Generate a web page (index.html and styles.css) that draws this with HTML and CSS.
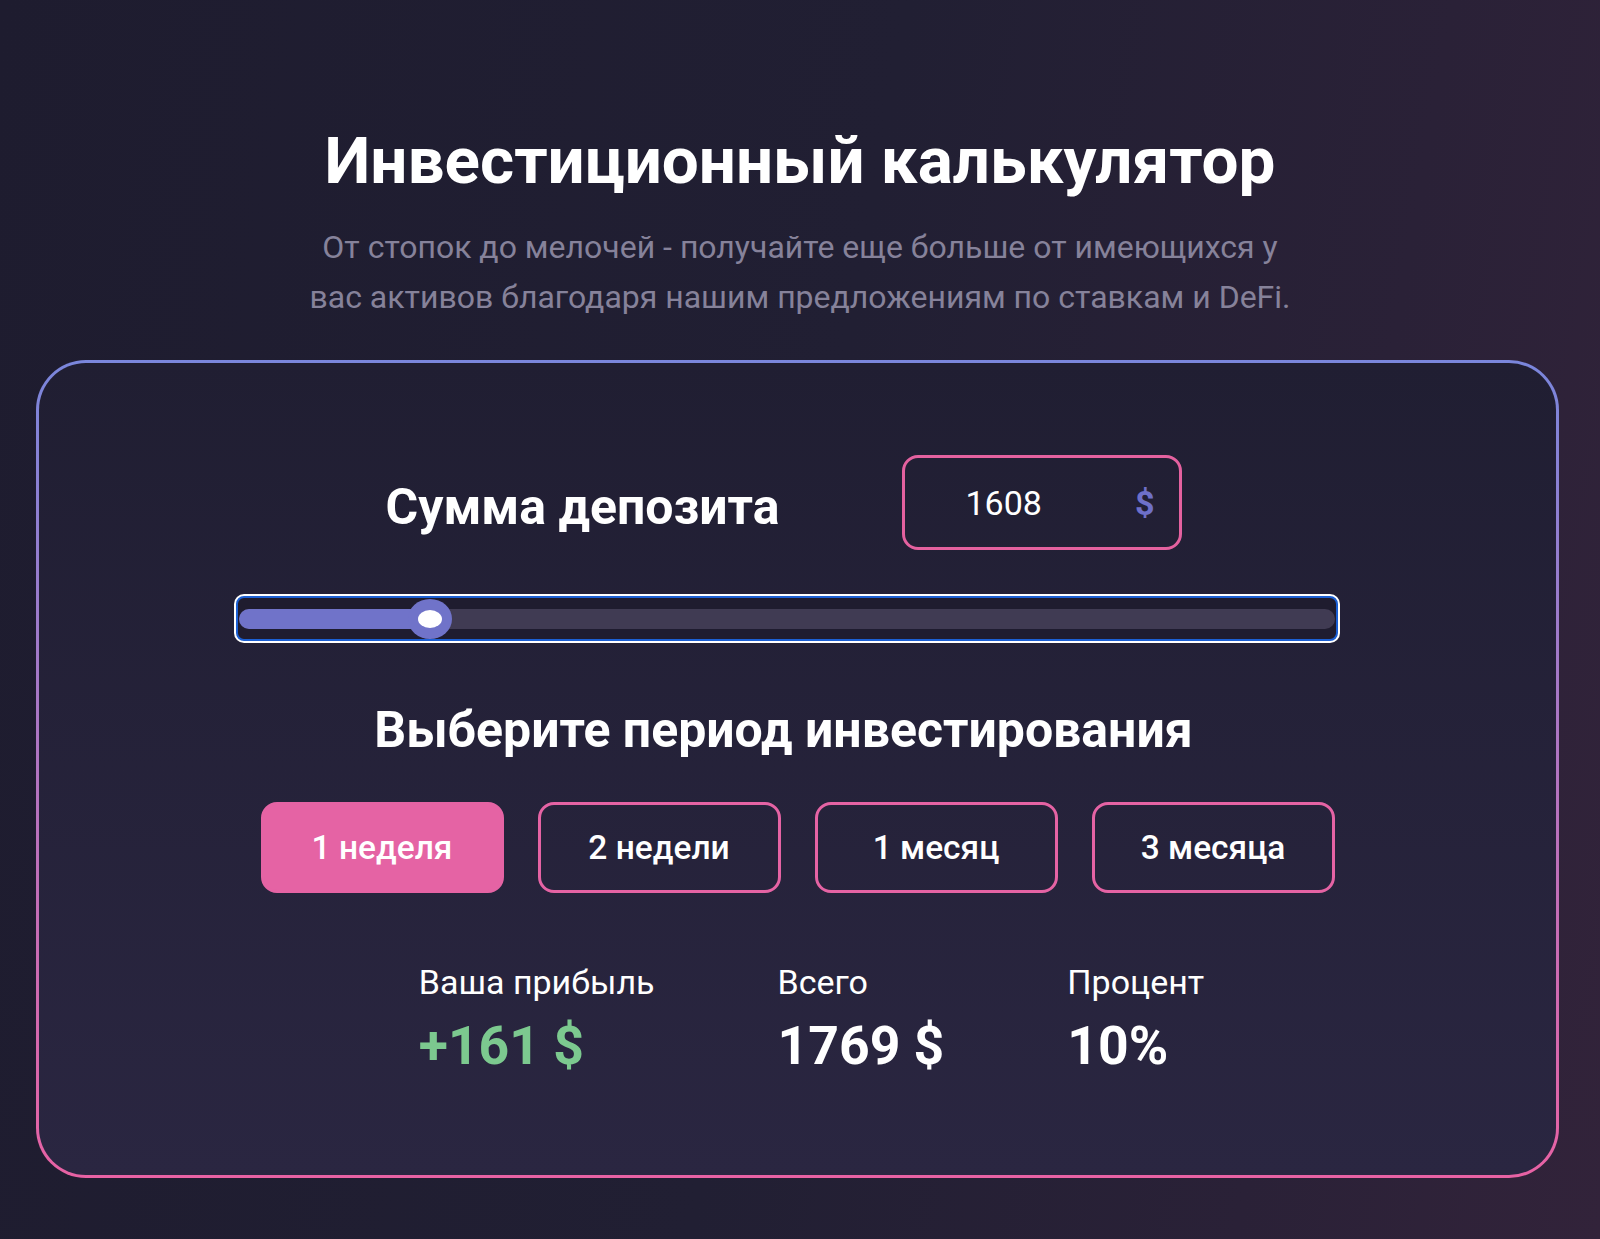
FILE: index.html
```html
<!DOCTYPE html>
<html lang="ru">
<head>
    <meta charset="UTF-8">
    <meta name="viewport" content="width=device-width, initial-scale=1.0">
    <title>Инвестиционный калькулятор</title>
    <link rel="stylesheet" href="styles.css">
</head>
<body>
    <main class="calc">
        <h1 class="calc-title">Инвестиционный калькулятор</h1>
        <p class="calc-lead">От стопок до мелочей - получайте еще больше от имеющихся у вас активов благодаря нашим предложениям по ставкам и DeFi.</p>

        <section class="card">
            <div class="deposit">
                <h2 class="deposit-label">Сумма депозита</h2>
                <label class="amount">
                    <input class="amount-input" type="text" value="1608">
                    <span class="amount-currency">$</span>
                </label>
            </div>

            <div class="range">
                <div class="range-track">
                    <div class="range-fill" style="width: 17.5%;"></div>
                    <div class="range-thumb" style="left: 17.5%;"></div>
                </div>
            </div>

            <h2 class="period-title">Выберите период инвестирования</h2>
            <div class="periods">
                <button class="period active">1 неделя</button>
                <button class="period">2 недели</button>
                <button class="period">1 месяц</button>
                <button class="period">3 месяца</button>
            </div>

            <div class="results">
                <div class="result">
                    <div class="result-label">Ваша прибыль</div>
                    <div class="result-value profit">+161 $</div>
                </div>
                <div class="result">
                    <div class="result-label">Всего</div>
                    <div class="result-value">1769 $</div>
                </div>
                <div class="result">
                    <div class="result-label">Процент</div>
                    <div class="result-value">10%</div>
                </div>
            </div>
        </section>
    </main>
</body>
</html>
```

FILE: styles.css
```css
body {
    font-family: Roboto, "Noto Sans", Arial, sans-serif;
    margin: 0;
    min-height: 100vh;
    color: #fff;
    background: linear-gradient(100deg, #1e1c2f 0%, #211f33 50%, #2a2137 80%, #32233a 100%);
}
.calc {
    padding-top: 121px;
    text-align: center;
}
.calc-title {
    margin: 0;
    font-size: 65.6px;
    line-height: 80px;
    font-weight: 700;
}
.calc-lead {
    max-width: 1000px;
    margin: 21px auto 0;
    font-size: 32px;
    line-height: 50px;
    color: #86829a;
}
.card {
    margin: 38px 41px 0 36px;
    padding: 92px 0 99px;
    border: 3px solid transparent;
    border-radius: 50px;
    background:
        linear-gradient(180deg, #201e32, #2a2641) padding-box,
        linear-gradient(180deg, #7a86dc, #e862a4) border-box;
}
.deposit {
    display: flex;
    align-items: center;
    justify-content: center;
    gap: 122px;
    margin-right: 28px;
}
.deposit-label {
    margin: 8px 0 0;
    font-size: 50px;
    line-height: 56px;
    font-weight: 700;
}
.amount {
    display: flex;
    align-items: center;
    width: 280px;
    height: 95px;
    box-sizing: border-box;
    padding: 0 24px 0 61px;
    border: 3px solid #e4619f;
    border-radius: 16px;
}
.amount-input {
    width: 100%;
    min-width: 0;
    padding: 0;
    border: none;
    outline: none;
    background: transparent;
    color: #fff;
    font-family: inherit;
    font-size: 34px;
}
.amount-currency {
    color: #6e70c8;
    font-size: 34px;
    font-weight: 700;
}
.range {
    display: flex;
    align-items: center;
    width: 1102px;
    height: 45px;
    box-sizing: border-box;
    margin: 46px auto 0;
    padding: 0 1px;
    border: 2px solid #1b5fd3;
    border-radius: 8px;
    box-shadow: 0 0 0 2px #fff;
    background: #1f1c2f;
    position: relative;
    left: -11px;
}
.range-track {
    position: relative;
    flex: 1;
    height: 20px;
    border-radius: 10px;
    background: #403b53;
}
.range-fill {
    height: 100%;
    border-radius: 10px 0 0 10px;
    background: #7073c9;
}
.range-thumb {
    position: absolute;
    top: 50%;
    width: 44px;
    height: 40px;
    border-radius: 50%;
    background: #7073c9;
    transform: translate(-50%, -50%);
}
.range-thumb::after {
    content: "";
    position: absolute;
    left: 10px;
    top: 11px;
    width: 24px;
    height: 18px;
    border-radius: 50%;
    background: #fff;
}
.period-title {
    margin: 61px 28px 0 0;
    font-size: 50px;
    line-height: 56px;
    font-weight: 700;
}
.periods {
    display: flex;
    justify-content: center;
    gap: 34px;
    margin-top: 44px;
}
.period {
    width: 243px;
    height: 91px;
    border: 3px solid #e563a4;
    border-radius: 16px;
    background: transparent;
    color: #fff;
    font-family: inherit;
    font-size: 33.5px;
    font-weight: 500;
    cursor: pointer;
}
.period.active {
    background: #e563a4;
}
.results {
    display: flex;
    justify-content: center;
    gap: 123px;
    margin-top: 69px;
    padding-left: 28px;
    text-align: left;
}
.result-label {
    font-size: 34px;
    line-height: 40px;
}
.result-value {
    margin-top: 14px;
    font-size: 53.5px;
    line-height: 60px;
    font-weight: 700;
}
.result-value.profit {
    color: #7cc98f;
}
```
